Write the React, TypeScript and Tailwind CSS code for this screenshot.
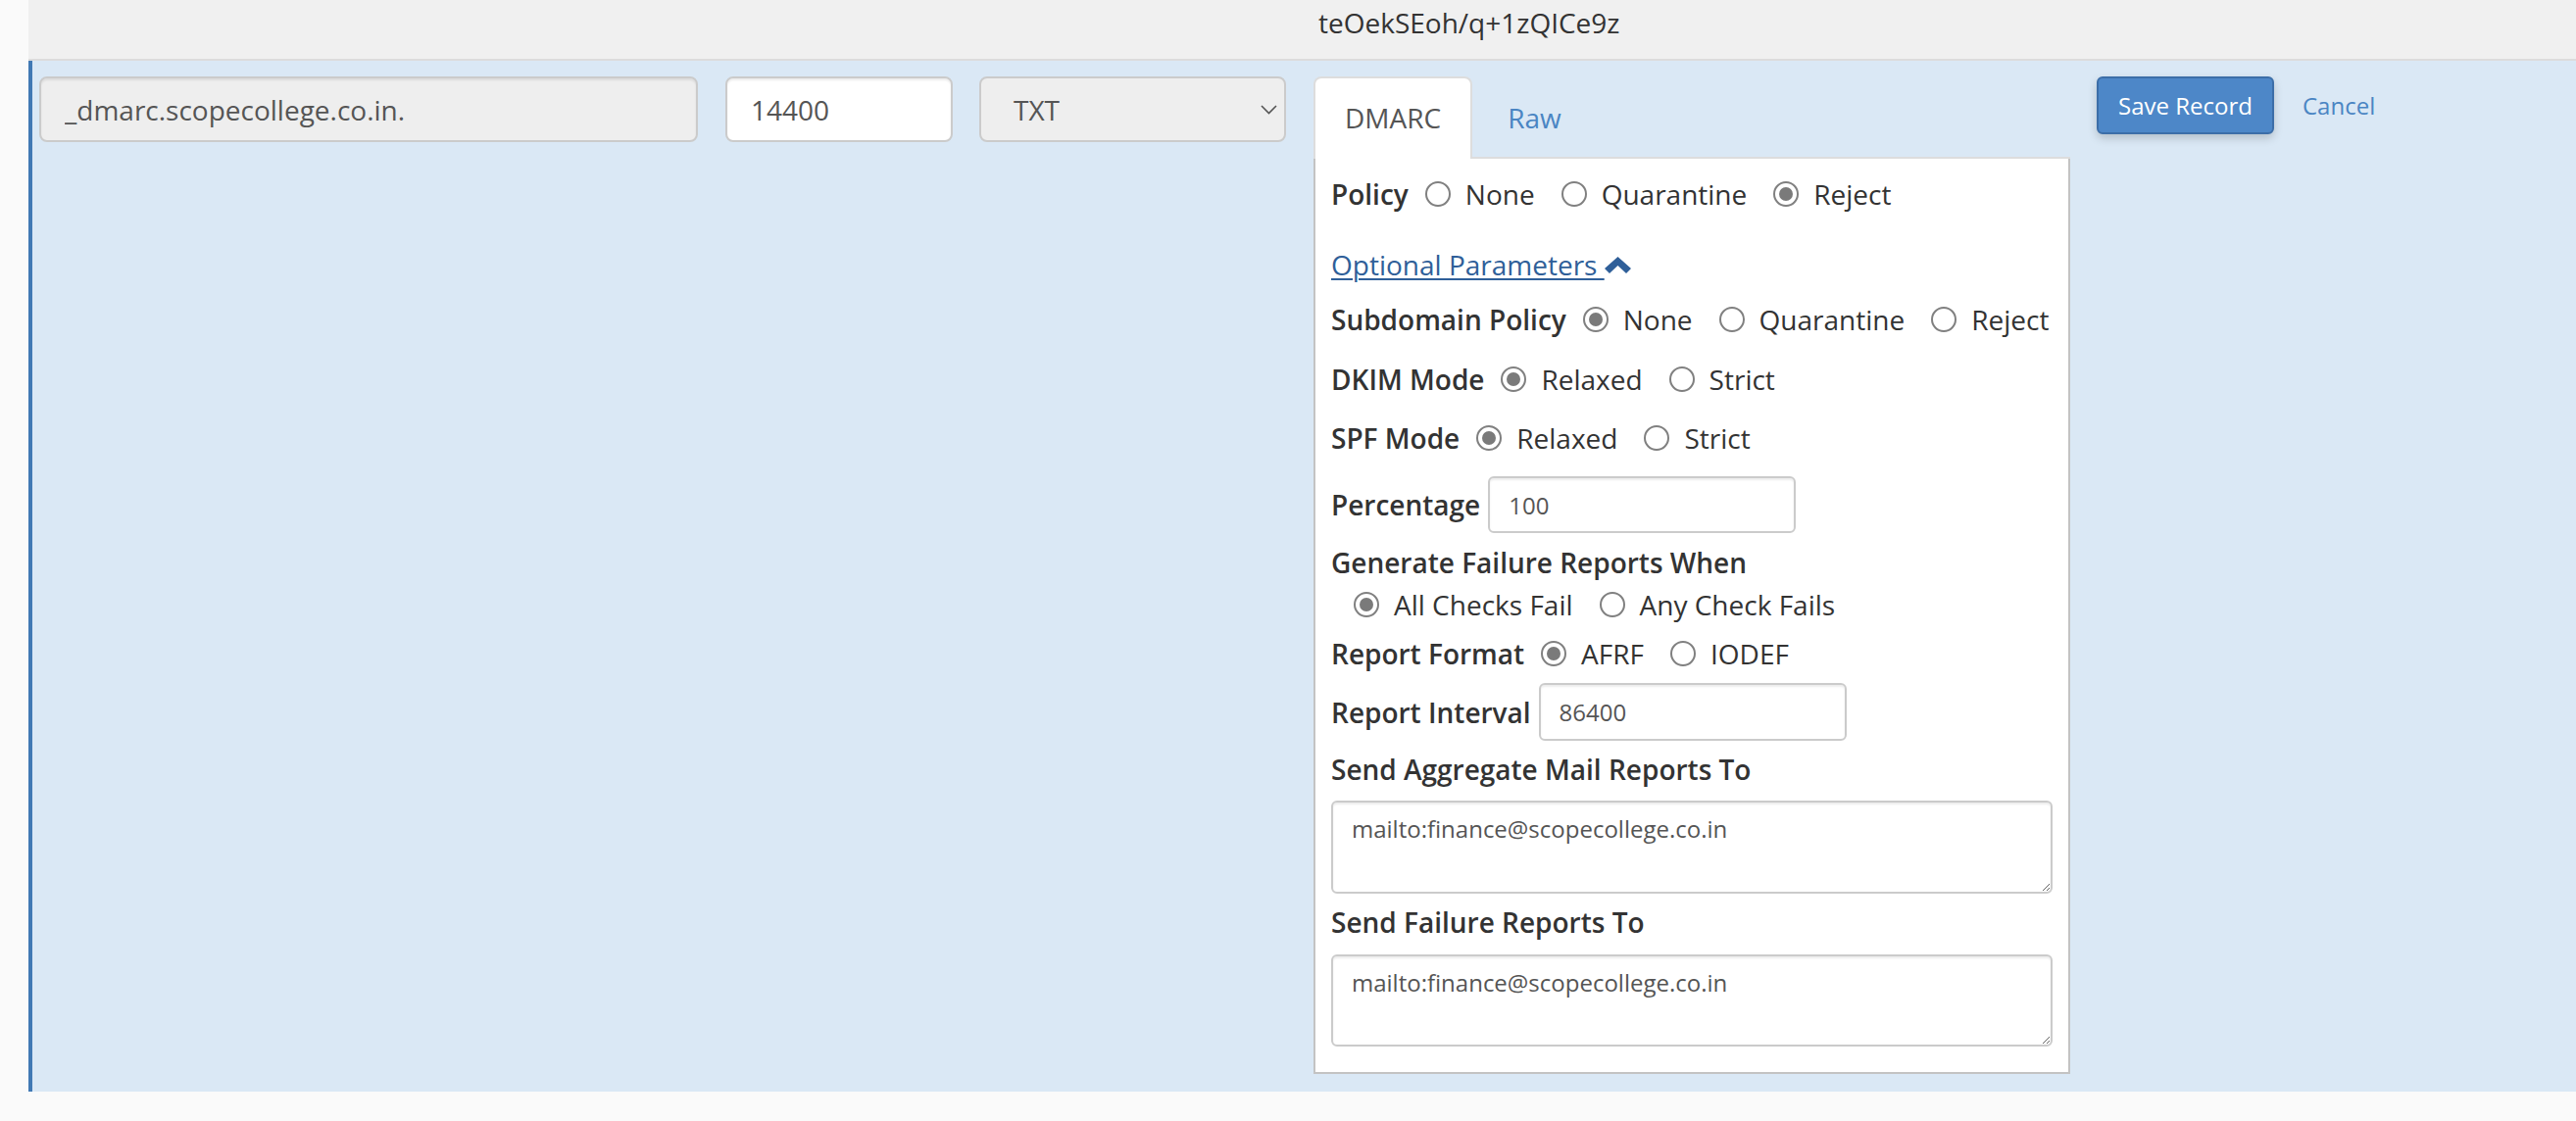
import React from 'react';

const Radio = ({ checked }: { checked?: boolean }) => (
  <span className="flex h-[26px] w-[26px] shrink-0 items-center justify-center rounded-full border-2 border-[#808080] bg-white">
    {checked && <span className="h-[14px] w-[14px] rounded-full bg-[#7a7a7a]" />}
  </span>
);

const Choice = ({ label, checked }: { label: string; checked?: boolean }) => (
  <span className="flex items-center gap-[15px]">
    <Radio checked={checked} />
    <span>{label}</span>
  </span>
);

const RadioRow = ({ label, options, checked, className }: { label: string; options: string[]; checked: number; className: string }) => (
  <div className={className}>
    <span className="mr-[17px] font-semibold">{label}</span>
    <div className="flex items-center gap-[27px]">
      {options.map((o, i) => (
        <Choice key={o} label={o} checked={i === checked} />
      ))}
    </div>
  </div>
);

const ChevronUp = () => (
  <svg width="27" height="17" viewBox="0 0 27 17" className="inline-block">
    <path d="M13.5 0 L27 12 L22 17 L13.5 9 L5 17 L0 12 Z" fill="#2f5f99" />
  </svg>
);

export default function App() {
  return (
    <div className="flex h-[1144px] w-full bg-[#fafafa] font-['Open_Sans',sans-serif] text-[28px] leading-[40px] text-[#333]">
      <div className="w-[29px] shrink-0" />
      <div className="flex flex-1 flex-col">
        {/* previous record row, cut off at the top */}
        <div className="h-[62px] border-b-2 border-[#dcdcdc] bg-[#f0f0f0] pl-[1316px] pt-[3px]">
          teOekSEoh/q+1zQICe9z
        </div>

        {/* record being edited */}
        <div className="flex h-[1052px] items-start border-l-4 border-[#4179b4] bg-[#dae8f5] pl-[7px] pt-[16px]">
          <input
            readOnly
            defaultValue="_dmarc.scopecollege.co.in."
            className="h-[67px] w-[672px] rounded-[8px] border-2 border-[#cbcbcb] bg-[#eee] px-[24px] text-[#555] shadow-[inset_0_2px_2px_rgba(0,0,0,0.075)] outline-none"
          />
          <input
            readOnly
            defaultValue="14400"
            className="ml-[28px] h-[67px] w-[232px] rounded-[8px] border-2 border-[#cbcbcb] bg-white px-[24px] text-[#555] shadow-[inset_0_2px_2px_rgba(0,0,0,0.075)] outline-none"
          />
          <div className="ml-[27px] flex h-[67px] w-[313px] items-center justify-between rounded-[8px] border-2 border-[#cbcbcb] bg-[#eee] pl-[33px] pr-[7px] text-[#555]">
            <span>TXT</span>
            <svg width="17" height="10" viewBox="0 0 17 10">
              <path d="M1 1 L8.5 8.5 L16 1" stroke="#555" strokeWidth="1.6" fill="none" />
            </svg>
          </div>

          {/* DMARC editor */}
          <div className="ml-[28px] flex w-[772px] flex-col">
            <div className="flex border-b-2 border-[#dddddd]">
              <div className="-mb-[2px] rounded-t-[8px] border-2 border-b-0 border-[#dddddd] bg-white px-[30px] pb-[22px] pt-[20px] text-[#555]">
                DMARC
              </div>
              <div className="ml-[2px] px-[34px] pt-[22px] text-[#4a85c3]">Raw</div>
            </div>
            <div className="flex flex-col border-2 border-t-0 border-[#c3c3c3] bg-white px-[16px] pb-[26px] pt-[16px]">
              <RadioRow className="flex h-[40px] items-center" label="Policy" options={['None', 'Quarantine', 'Reject']} checked={2} />

              <div className="mt-[32px] flex h-[40px] items-center">
                <span className="whitespace-pre text-[#2f5f99] underline decoration-[2px] underline-offset-[3px]">Optional Parameters </span>
                <ChevronUp />
              </div>

              <RadioRow className="mt-[16px] flex h-[40px] items-center" label="Subdomain Policy" options={['None', 'Quarantine', 'Reject']} checked={0} />
              <RadioRow className="mt-[21px] flex h-[40px] items-center" label="DKIM Mode" options={['Relaxed', 'Strict']} checked={0} />
              <RadioRow className="mt-[20px] flex h-[40px] items-center" label="SPF Mode" options={['Relaxed', 'Strict']} checked={0} />

              <div className="mt-[19px] flex h-[58px] items-center">
                <span className="mr-[8px] font-semibold">Percentage</span>
                <input
                  readOnly
                  defaultValue="100"
                  className="h-[58px] w-[314px] rounded-[6px] border-2 border-[#cbcbcb] px-[19px] text-[24px] text-[#555] shadow-[inset_0_2px_2px_rgba(0,0,0,0.075)] outline-none"
                />
              </div>

              <div className="mt-[10px] h-[40px] font-semibold">Generate Failure Reports When</div>
              <div className="mt-[3px] flex h-[40px] items-center gap-[27px] pl-[23px]">
                <Choice label="All Checks Fail" checked />
                <Choice label="Any Check Fails" />
              </div>

              <RadioRow className="mt-[10px] flex h-[40px] items-center" label="Report Format" options={['AFRF', 'IODEF']} checked={0} />

              <div className="mt-[10px] flex h-[59px] items-center">
                <span className="mr-[8px] font-semibold">Report Interval</span>
                <input
                  readOnly
                  defaultValue="86400"
                  className="h-[59px] w-[314px] rounded-[6px] border-2 border-[#cbcbcb] px-[19px] text-[24px] text-[#555] shadow-[inset_0_2px_2px_rgba(0,0,0,0.075)] outline-none"
                />
              </div>

              <div className="mt-[9px] h-[40px] font-semibold">Send Aggregate Mail Reports To</div>
              <textarea
                readOnly
                defaultValue="mailto:finance@scopecollege.co.in"
                className="mt-[12px] h-[95px] w-full rounded-[6px] border-2 border-[#cbcbcb] px-[19px] py-[10px] text-[24px] leading-[34px] text-[#555] shadow-[inset_0_2px_2px_rgba(0,0,0,0.075)] outline-none"
              />

              <div className="mt-[9px] h-[40px] font-semibold">Send Failure Reports To</div>
              <textarea
                readOnly
                defaultValue="mailto:finance@scopecollege.co.in"
                className="mt-[13px] h-[94px] w-full rounded-[6px] border-2 border-[#cbcbcb] px-[19px] py-[10px] text-[24px] leading-[34px] text-[#555] shadow-[inset_0_2px_2px_rgba(0,0,0,0.075)] outline-none"
              />
            </div>
          </div>

          <div className="ml-[27px] flex items-center">
            <button className="flex h-[59px] w-[181px] items-center justify-center rounded-[6px] border-2 border-[#3c6ea8] bg-[#4d87c8] text-[24px] leading-[34px] text-white shadow-[0_4px_10px_rgba(0,0,0,0.18)]">
              Save Record
            </button>
            <span className="ml-[29px] text-[24px] leading-[34px] text-[#4a85c3]">Cancel</span>
          </div>
        </div>
      </div>
    </div>
  );
}
